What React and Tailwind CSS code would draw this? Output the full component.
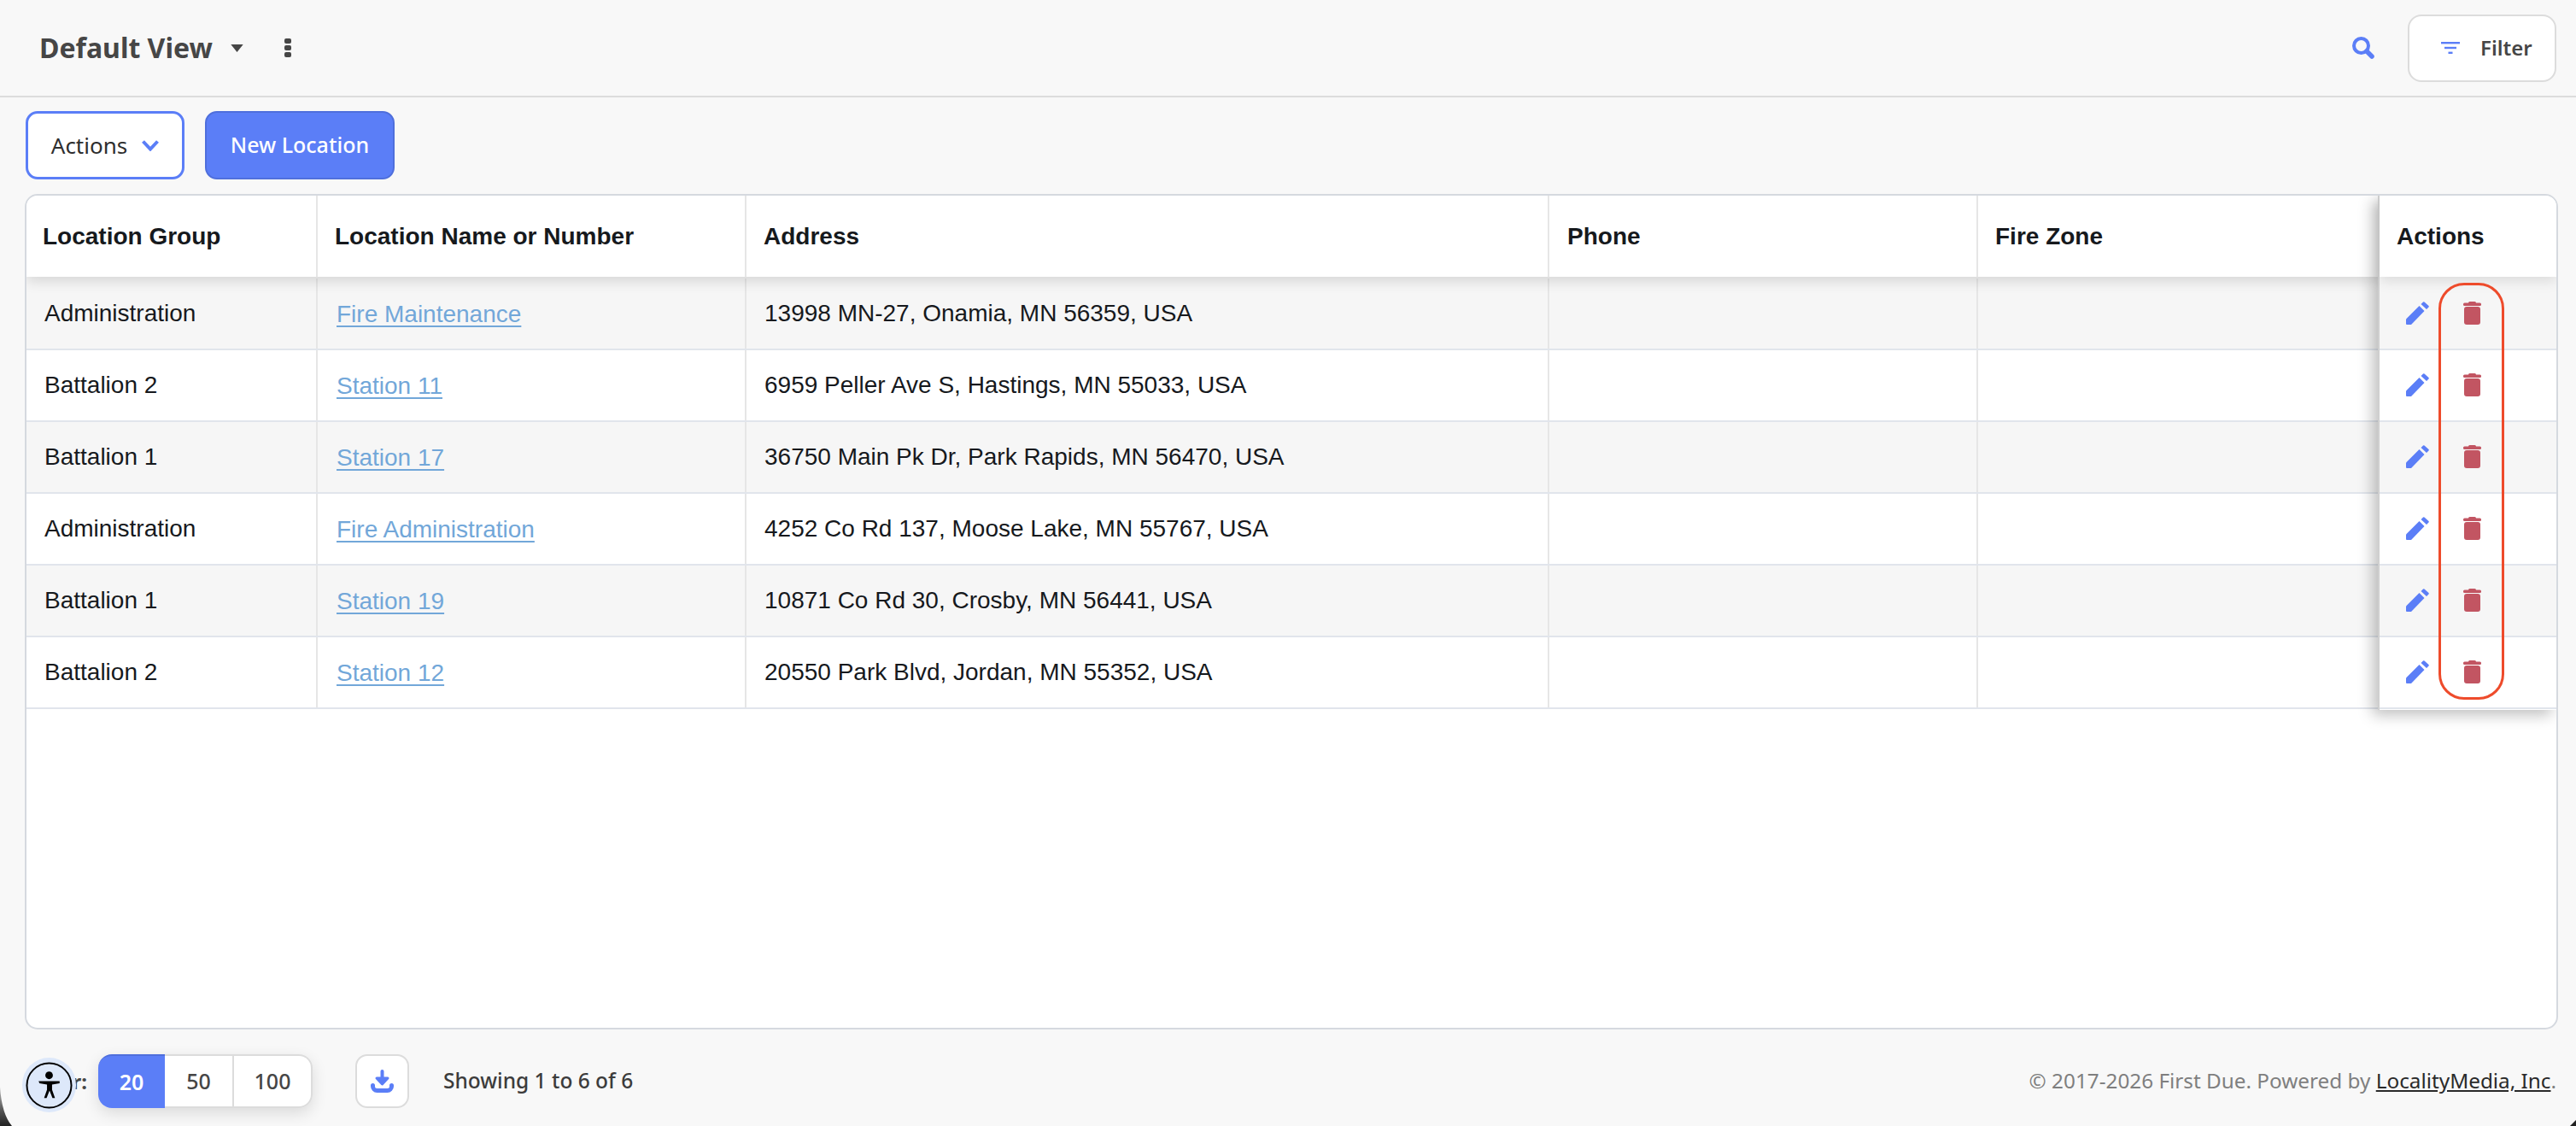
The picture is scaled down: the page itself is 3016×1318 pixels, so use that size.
import React from "react";

const rows = [
  { group: "Administration", name: "Fire Maintenance", address: "13998 MN-27, Onamia, MN 56359, USA" },
  { group: "Battalion 2", name: "Station 11", address: "6959 Peller Ave S, Hastings, MN 55033, USA" },
  { group: "Battalion 1", name: "Station 17", address: "36750 Main Pk Dr, Park Rapids, MN 56470, USA" },
  { group: "Administration", name: "Fire Administration", address: "4252 Co Rd 137, Moose Lake, MN 55767, USA" },
  { group: "Battalion 1", name: "Station 19", address: "10871 Co Rd 30, Crosby, MN 56441, USA" },
  { group: "Battalion 2", name: "Station 12", address: "20550 Park Blvd, Jordan, MN 55352, USA" },
];

const Pencil = () => (
  <svg viewBox="0 0 27 27" className="w-[27px] h-[27px] fill-[#5b7ef7]">
    <path d="M0 20.5L15.5 5l6 6L6 27H1q-1 0-1-1z" />
    <path d="M17.5 3L20 .5q.8-.6 1.5 0l5 4.5q.7.8 0 1.5L24 9z" />
  </svg>
);

const Trash = () => (
  <svg viewBox="0 0 21 27" className="w-[21px] h-[27px] fill-[#c25562]">
    <rect x="6" y="0" width="9" height="3" rx="1.5" />
    <rect x="0" y="1.5" width="21" height="3.5" rx="1.5" />
    <rect x="1" y="6" width="19" height="21" rx="3" />
  </svg>
);

const Cell = ({ className, children }) => (
  <div className={`flex items-center h-full border-r-2 border-[#e6e6e6] ${className}`}>{children}</div>
);

export default function App() {
  return (
    <div className="relative w-[3016px] h-[1318px] overflow-hidden bg-[#f8f8f8] font-['Noto_Sans',sans-serif]">
      <header className="flex items-center justify-between h-[114px] border-b-2 border-[#dcdcdc] pl-[46px] pr-[23px]">
        <div className="flex items-center">
          <span className="text-[32px] font-bold text-[#464646]">Default View</span>
          <svg viewBox="0 0 16 10" className="ml-[21px] w-[15px] h-[9px] fill-[#464646]">
            <path d="M0 0h16L8 10z" />
          </svg>
          <svg viewBox="0 0 8 22" className="ml-[48px] w-[8px] h-[22px] fill-[#464646]">
            <rect width="8" height="6" rx="2" />
            <rect y="8" width="8" height="6" rx="2" />
            <rect y="16" width="8" height="6" rx="2" />
          </svg>
        </div>
        <div className="flex items-center">
          <svg viewBox="0 0 26 26" className="w-[26px] h-[26px] fill-none stroke-[#5b7ef7]">
            <circle cx="10.5" cy="10.5" r="8.5" strokeWidth="4" />
            <path d="M17 17l6 6" strokeWidth="5.5" strokeLinecap="round" />
          </svg>
          <button className="ml-[39px] flex items-center w-[174px] h-[79px] bg-white border-2 border-[#dcdcdc] rounded-[16px] pl-[37px]">
            <svg viewBox="0 0 22 14" className="w-[22px] h-[14px] fill-[#5b7ef7]">
              <rect width="22" height="2.4" />
              <rect x="4" y="5.8" width="14" height="2.4" />
              <rect x="8.5" y="11.6" width="5" height="2.4" />
            </svg>
            <span className="ml-[24px] text-[24px] font-semibold text-[#464646]">Filter</span>
          </button>
        </div>
      </header>

      <div className="flex gap-[24px] pl-[30px] pt-[16px]">
        <button className="flex items-center justify-center gap-[17px] w-[186px] h-[80px] bg-white border-[3px] border-[#5b7ef7] rounded-[14px] text-[26px] text-[#2e2e2e]">
          Actions
          <svg viewBox="0 0 20 13" className="w-[20px] h-[13px] fill-none stroke-[#5b7ef7] stroke-[4]">
            <path d="M1.5 1.5L10 10.5L18.5 1.5" />
          </svg>
        </button>
        <button className="w-[222px] h-[80px] bg-[#5b7ef7] border-2 border-[#4f6fdc] rounded-[14px] text-[25px] font-medium text-white">
          New Location
        </button>
      </div>

      <div className="flex ml-[29px] mt-[17px] w-[2966px] h-[978px] bg-white rounded-[15px] border-2 border-[#d5d9df] overflow-hidden font-['Liberation_Sans',sans-serif] text-[28px] text-[#16191d]">
        <div className="flex-1 min-w-0">
          <div className="relative z-10 grid grid-cols-[341px_502px_940px_502px_1fr] h-[95px] bg-white font-bold shadow-[0_6px_14px_rgba(0,0,0,0.12)]">
            <Cell className="pl-[19px]">Location Group</Cell>
            <Cell className="pl-[20px]">Location Name or Number</Cell>
            <Cell className="pl-[20px]">Address</Cell>
            <Cell className="pl-[21px]">Phone</Cell>
            <div className="flex items-center pl-[20px]">Fire Zone</div>
          </div>
          <div className="border-t-2 border-[#f6f6f6]">
            {rows.map((row, i) => (
              <div
                key={i}
                className={`grid grid-cols-[341px_502px_940px_502px_1fr] h-[84px] border-b-2 border-[#e1e5ec] ${i % 2 === 0 ? "bg-[#f6f6f6]" : "bg-white"}`}
              >
                <Cell className="pl-[21px] pb-[1px]">{row.group}</Cell>
                <Cell className="pl-[22px] pt-[1px]">
                  <a className="text-[#72a7d9] underline underline-offset-[4px]">{row.name}</a>
                </Cell>
                <Cell className="pl-[21px] pb-[1px]">{row.address}</Cell>
                <Cell />
                <div />
              </div>
            ))}
          </div>
        </div>

        <div className="relative z-20 w-[209px] h-[602px] bg-white border-l-2 border-[#cfcfcf] shadow-[-6px_6px_16px_rgba(0,0,0,0.25)]">
          <div className="relative z-10 flex items-center h-[95px] pl-[20px] bg-white font-bold shadow-[0_6px_14px_rgba(0,0,0,0.1)]">
            Actions
          </div>
          <div className="border-t-2 border-[#f6f6f6]">
            {rows.map((row, i) => (
              <div
                key={i}
                className={`flex items-center h-[84px] pl-[31px] pb-[2px] gap-[40px] border-b-2 border-[#e1e5ec] ${i % 2 === 0 ? "bg-[#f6f6f6]" : "bg-white"}`}
              >
                <Pencil />
                <Trash />
              </div>
            ))}
          </div>
          <div className="absolute z-20 left-[69px] top-[102px] w-[77px] h-[488px] border-[3px] border-[#ee4b2b] rounded-[30px]" />
        </div>
      </div>

      <footer className="flex items-center justify-between pl-[52px] pr-[23px] pt-[29px]">
        <div className="flex items-center">
          <span className="w-[63px] pr-[13px] text-right text-[24px] font-bold text-[#464646]">Per:</span>
          <div className="flex h-[63px] text-[25px] font-medium text-[#464646] rounded-[16px] shadow-[0_6px_18px_rgba(0,0,0,0.12)]">
            <span className="flex items-center justify-center w-[78px] bg-[#5b7ef7] border-t-2 border-[#4f6fdc] rounded-l-[16px] font-semibold text-white">20</span>
            <span className="flex items-center justify-center w-[81px] bg-white border-y-2 border-r-2 border-[#dcdcdc]">50</span>
            <span className="flex items-center justify-center w-[92px] bg-white border-y-2 border-r-2 border-[#dcdcdc] rounded-r-[16px]">100</span>
          </div>
          <button className="ml-[50px] flex items-center justify-center w-[63px] h-[63px] bg-white border-2 border-[#dcdcdc] rounded-[14px]">
            <svg viewBox="0 0 27 27" className="w-[27px] h-[27px] fill-[#5b7ef7] stroke-[#5b7ef7]">
              <path d="M13.5 2v9" fill="none" strokeWidth="4" strokeLinecap="round" />
              <path d="M7 10h13l-6.5 7z" strokeWidth="3" strokeLinejoin="round" />
              <path d="M2.500 18.5v1a5 5 0 0 0 5 5h12a5 5 0 0 0 5-5v-1" fill="none" strokeWidth="5" strokeLinecap="round" />
            </svg>
          </button>
          <span className="ml-[40px] text-[24.5px] font-medium text-[#3c3c3c]">Showing 1 to 6 of 6</span>
        </div>
        <span className="text-[24.3px] text-[#7f7f7f]">
          © 2017-2026 First Due. Powered by <a className="text-[#2a2a2a] underline">LocalityMedia, Inc</a>.
        </span>
      </footer>

      {/* accessibility widget sits on top of the "per page" label */}
      <div className="absolute left-[26px] top-[1238px] flex items-center justify-center w-[63px] h-[64px] rounded-full bg-[#dde8fa]">
        <svg viewBox="0 0 56 56" className="w-[55px] h-[55px]">
          <circle cx="28" cy="28" r="26.5" fill="none" stroke="#000" strokeWidth="2" />
          <circle cx="28" cy="16" r="4.5" />
          <path d="M15.5 23h25v2.5l-9 1.5v6l3.5 10h-3l-3.5-9-3.5 9h-3l3.5-10v-6l-9-1.5z" />
        </svg>
      </div>

      {/* dark window corners of the capture */}
      <svg viewBox="0 0 14 46" className="absolute left-0 bottom-0 w-[14px] h-[46px]">
        <defs>
          <linearGradient id="corner" x1="0" y1="0" x2="0" y2="1">
            <stop offset="0" stopColor="#bbb" />
            <stop offset="0.6" stopColor="#555" />
            <stop offset="1" stopColor="#222" />
          </linearGradient>
        </defs>
        <path d="M0 0Q2 32 14 46H0z" fill="url(#corner)" />
      </svg>
      <svg viewBox="0 0 7 7" className="absolute right-0 bottom-0 w-[7px] h-[7px] fill-[#222]">
        <path d="M7 0v7H0z" />
      </svg>
    </div>
  );
}
